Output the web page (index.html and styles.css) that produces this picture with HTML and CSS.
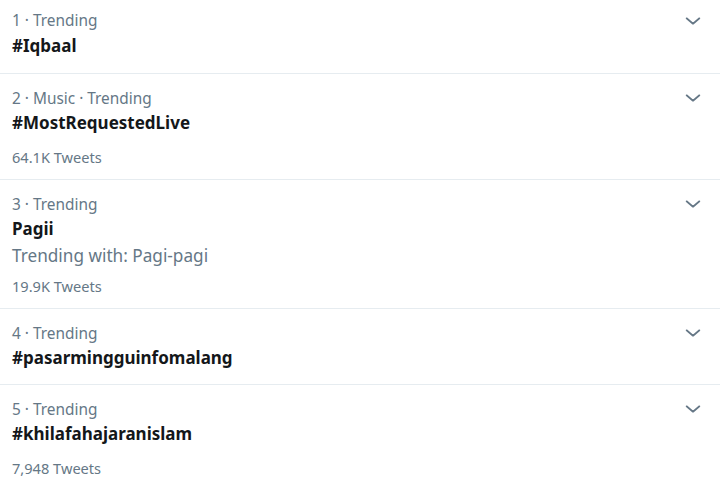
FILE: index.html
```html
<!DOCTYPE html>
<html>
<head>
<meta charset="utf-8">
<link rel="stylesheet" href="styles.css">
</head>
<body>
<div class="list">
  <div class="trend first">
    <div class="info">
      <div class="meta">1 · Trending</div>
      <div class="title">#Iqbaal</div>
    </div>
    <svg class="chev" viewBox="0 0 24 24"><path d="M5 9l7 6 7-6"/></svg>
  </div>
  <div class="trend">
    <div class="info">
      <div class="meta">2 · Music · Trending</div>
      <div class="title">#MostRequestedLive</div>
      <div class="count">64.1K Tweets</div>
    </div>
    <svg class="chev" viewBox="0 0 24 24"><path d="M5 9l7 6 7-6"/></svg>
  </div>
  <div class="trend">
    <div class="info">
      <div class="meta">3 · Trending</div>
      <div class="title">Pagii</div>
      <div class="with">Trending with: Pagi-pagi</div>
      <div class="count">19.9K Tweets</div>
    </div>
    <svg class="chev" viewBox="0 0 24 24"><path d="M5 9l7 6 7-6"/></svg>
  </div>
  <div class="trend short">
    <div class="info">
      <div class="meta">4 · Trending</div>
      <div class="title">#pasarmingguinfomalang</div>
    </div>
    <svg class="chev" viewBox="0 0 24 24"><path d="M5 9l7 6 7-6"/></svg>
  </div>
  <div class="trend">
    <div class="info">
      <div class="meta">5 · Trending</div>
      <div class="title">#khilafahajaranislam</div>
      <div class="count">7,948 Tweets</div>
    </div>
    <svg class="chev" viewBox="0 0 24 24"><path d="M5 9l7 6 7-6"/></svg>
  </div>
</div>
</body>
</html>
```
FILE: styles.css
```css
html, body {
  margin: 0;
  padding: 0;
  background: #fff;
}
body {
  font-family: "Noto Sans", "Open Sans", sans-serif;
  color: #14171a;
}
.list {
  display: flex;
  flex-direction: column;
}
.trend {
  display: flex;
  justify-content: space-between;
  align-items: flex-start;
  padding: 14px 16px 12px 12px;
  border-bottom: 1px solid #e6ecf0;
}
.trend.first {
  padding-top: 10px;
  padding-bottom: 14px;
}
.trend.short {
  padding-bottom: 13px;
}
.info {
  display: flex;
  flex-direction: column;
}
.meta {
  font-size: 15.4px;
  line-height: 22px;
  color: #657786;
}
.title {
  font-size: 17px;
  line-height: 26px;
  font-weight: 700;
  margin-top: 0;
}
.first .title {
  margin-top: 1px;
}
.with {
  font-size: 17.2px;
  line-height: 26px;
  color: #657786;
  margin-top: 1px;
}
.count {
  font-size: 14.6px;
  line-height: 20px;
  color: #657786;
  margin-top: 11px;
}
.with + .count {
  margin-top: 7px;
}
.chev {
  width: 22px;
  height: 22px;
  margin-top: -1px;
  fill: none;
  stroke: #657786;
  stroke-width: 1.8;
  stroke-linecap: round;
  stroke-linejoin: round;
}
.first .chev {
  margin-top: 0;
}
```
